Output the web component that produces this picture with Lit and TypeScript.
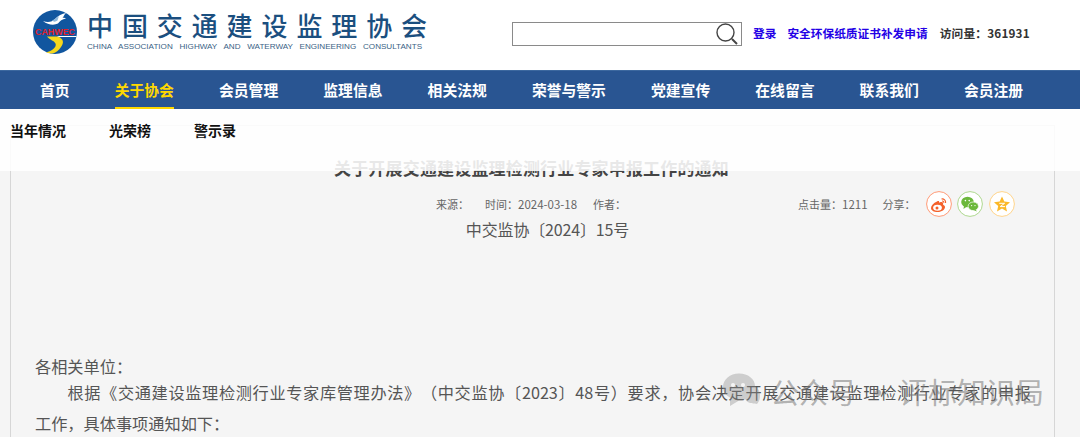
import { LitElement, html, css, svg } from "lit";
import { customElement } from "lit/decorators.js";

const NAV = ["首页", "关于协会", "会员管理", "监理信息", "相关法规", "荣誉与警示", "党建宣传", "在线留言", "联系我们", "会员注册"];

const logo = svg`<svg class="logo" viewBox="0 0 44 44" width="44" height="44">
  <circle cx="22" cy="22" r="22" fill="#11569f"/>
  <path d="M10 11 C15 13 19 12 22 9 C25 6 29 3.500 33 3 C31 5 31 6 29.500 8 C31 7.500 32 7.800 33 8.500 C29 9 27 11 25 13.500 C21 15.500 15 15 10 11Z" fill="#fff"/>
  <path d="M19 10.500 C21 10 23 8 26 6 L24.500 10.500 C22.500 12 20.500 12 19 10.500Z" fill="#8fb8dc"/>
  <path d="M14 26.500 H25 C31 29 31 33 28 37 C26 40 23 43 19 43.500 C17 43.500 15 43 13 42.500 C19 41 24 37 22.500 33.500 C21.500 31 17 30 14 26.500Z" fill="#f6d81c"/>
  <path d="M24 26 H43.500 V27 H26Z" fill="#fff"/>
  <text x="22" y="24.500" text-anchor="middle" class="logotext">CAHWEC</text>
</svg>`;

const search = svg`<svg viewBox="0 0 24 24" width="24" height="24" fill="none" stroke="#444" stroke-width="1.4">
  <circle cx="10.500" cy="10.500" r="8.500"/><path d="M17 17 L22 22" stroke-width="2"/>
</svg>`;

const weibo = svg`<svg viewBox="0 0 26 26" width="26" height="26">
  <circle cx="13" cy="13" r="12.400" fill="#fff" stroke="#ff9a76" stroke-width="1"/>
  <path d="M11 10.500 C7.500 12 5 14.500 5 17 C5 19.500 8 21 11.500 21 C16 21 19 18.500 19 16 C19 14.500 17.500 14 17 13.500 C17.500 12 17 11 15.500 11 C14.500 11 13.500 11.500 13 11.500 C13.400 10 12.500 9.800 11 10.500Z" fill="#f4622c"/>
  <ellipse cx="11.500" cy="16.800" rx="4.400" ry="3" fill="#fff"/>
  <circle cx="11" cy="17" r="1.500" fill="#f4622c"/>
  <path d="M15.500 8 C18 7.500 20 9.500 19.600 12 M16 10 C17.200 9.800 18 10.600 17.800 11.800" fill="none" stroke="#f4622c" stroke-width="1.100"/>
</svg>`;

const wechat = svg`<svg viewBox="0 0 26 26" width="26" height="26">
  <circle cx="13" cy="13" r="12.400" fill="#fff" stroke="#aed88f" stroke-width="1"/>
  <ellipse cx="10.500" cy="11" rx="6.300" ry="5.300" fill="#6cb83c"/>
  <path d="M7 14.500 L6.500 18 L10 15.500Z" fill="#6cb83c"/>
  <ellipse cx="16.300" cy="15.300" rx="5.200" ry="4.300" fill="#6cb83c" stroke="#fff" stroke-width=".7"/>
  <path d="M18.500 18.500 L20 20.500 L16.500 19Z" fill="#6cb83c"/>
  <circle cx="8.400" cy="9.600" r=".8" fill="#fff"/><circle cx="12.200" cy="9.600" r=".8" fill="#fff"/>
  <circle cx="14.600" cy="14.600" r=".65" fill="#fff"/><circle cx="18" cy="14.600" r=".65" fill="#fff"/>
</svg>`;

const qzone = svg`<svg viewBox="0 0 26 26" width="26" height="26">
  <circle cx="13" cy="13" r="12.400" fill="#fff" stroke="#ffd48a" stroke-width="1"/>
  <path d="M13 5.500 L15.300 10.600 L21 11.200 L16.800 14.900 L18 20.400 L13 17.600 L8 20.400 L9.200 14.900 L5 11.200 L10.700 10.600Z" fill="#fbb829"/>
  <path d="M10.200 12.300 H15.600 L11.200 15.600 H16" fill="none" stroke="#fff" stroke-width="1"/>
</svg>`;

const wmIcon = svg`<svg viewBox="0 0 40 36" width="40" height="36" fill="#8c8c8c" fill-opacity=".38">
  <path d="M17 .5 C8 .5 1 6.500 1 14 C1 18.500 3.500 22 8 24.500 L8 33 L17 27.500 C20 27.500 22 27 23 26 C27 32 33 30 35 31 C38 28 38 24 38 22 C38 17 34 13 33 13 C33 6 26 .5 17 .5Z"/>
  <circle cx="11" cy="12" r="2" fill="#f5f5f5" fill-opacity="1"/><circle cx="21" cy="12" r="2" fill="#f5f5f5" fill-opacity="1"/>
</svg>`;

@customElement("app-root")
export class AppRoot extends LitElement {
  static styles = css`
    :host {
      display: block;
      position: relative;
      width: 1080px;
      height: 437px;
      overflow: hidden;
      background: #f5f5f5;
      font-family: "Noto Sans CJK SC", "Liberation Sans", sans-serif;
      color: #555;
      text-spacing-trim: space-all;
    }
    .head {
      height: 70px;
      background: #fff;
      display: flex;
      align-items: flex-start;
      box-sizing: border-box;
      padding: 10px 50px 0 33px;
    }
    .logo { flex: none; }
    .logotext { font: bold 8.900px "Liberation Sans", sans-serif; fill: #e0202a; }
    .brand { margin-left: 10px; width: 350px; margin-top: -1px; }
    .cn {
      font-size: 26px;
      line-height: 31px;
      letter-spacing: 8.900px;
      color: #1b4f7f;
      font-weight: 500;
      white-space: nowrap;
    }
    .en {
      margin-top: 1px;
      font: 8.100px/12px "Liberation Sans", sans-serif;
      color: #3a5f85;
      white-space: nowrap;
      word-spacing: 4.500px;
    }
    .search {
      flex: none;
      box-sizing: border-box;
      width: 230px;
      height: 24px;
      margin: 12px 0 0 75px;
      background: #fff;
      border: 1px solid #8a8a8a;
      display: flex;
      align-items: center;
      justify-content: flex-end;
      padding-right: 2px;
    }
    .top {
      display: flex;
      margin: 13px 0 0 11px;
      font-size: 11.700px;
      line-height: 20px;
      font-weight: 700;
      white-space: nowrap;
    }
    .top a { color: #2300e6; margin-right: 11px; }
    .top span { color: #333; margin-left: 1px; letter-spacing: .2px; }
    nav {
      height: 39px;
      background: #295592;
      border-top: 1px solid #3c689f;
      box-sizing: border-box;
      display: flex;
      gap: 45.100px;
      padding-left: 40px;
    }
    nav a {
      color: #fff;
      font-size: 14.800px;
      line-height: 38px;
      font-weight: 700;
      height: 36px;
      white-space: nowrap;
    }
    nav a.on { color: #ffd800; border-bottom: 2.500px solid #ffd800; }
    .sub {
      position: absolute;
      left: 0;
      right: 0;
      top: 109px;
      height: 62px;
      background: rgba(255, 255, 255, .88);
      display: flex;
      gap: 43px;
      padding: 11px 0 0 10px;
      box-sizing: border-box;
      font-size: 14px;
      line-height: 20px;
      font-weight: 700;
      color: #111;
    }
    .card {
      margin: 16px 25px 0 10px;
      height: 340px;
      border: 1px solid #d6d6d6;
      box-sizing: border-box;
      padding: 31px 23px 0 24px;
    }
    h1 {
      margin: 0 0 0 -3px;
      font-size: 17px;
      line-height: 22px;
      font-weight: 700;
      letter-spacing: .17px;
      color: #444;
      text-align: center;
    }
    .meta {
      display: flex;
      align-items: center;
      height: 26px;
      margin-top: 12px;
      font-size: 11px;
      color: #666;
      white-space: nowrap;
    }
    .meta .l { display: flex; gap: 16px; margin-left: 401px; }
    .meta .time { display: flex; }
    .meta .digits { font-size: 11.500px; }
    .meta .r { display: flex; align-items: center; margin-left: 172px; }
    .meta .r .share { margin-left: 15px; margin-right: 10px; }
    .icons { display: flex; gap: 5.500px; }
    .icons svg { display: block; }
    .num {
      margin: 0 0 0 -3px;
      text-align: center;
      text-indent: 2em;
      font-size: 16px;
      letter-spacing: -.15px;
      line-height: 24px;
    }
    .body { margin-top: 114px; font-size: 16.200px; color: #555; }
    .body p { margin: 0; }
    .p1 { line-height: 22px; }
    .first {
      display: block;
      text-indent: 2em;
      line-height: 31px;
      text-align: justify;
      text-align-last: justify;
      text-justify: inter-character;
    }
    .next { display: block; line-height: 31px; }
    .wm {
      position: absolute;
      left: 722px;
      top: 373px;
      display: flex;
      align-items: center;
      gap: 8px;
      font-size: 29px;
      line-height: 36px;
      color: rgba(120, 120, 120, .55);
      white-space: nowrap;
      pointer-events: none;
    }
  `;

  render() {
    return html`
      <header class="head">
        ${logo}
        <div class="brand">
          <div class="cn">中国交通建设监理协会</div>
          <div class="en">CHINA ASSOCIATION HIGHWAY AND WATERWAY ENGINEERING CONSULTANTS</div>
        </div>
        <div class="search">${search}</div>
        <div class="top">
          <a>登录</a><a>安全环保纸质证书补发申请</a><span>访问量：361931</span>
        </div>
      </header>
      <nav>
        ${NAV.map((n) => html`<a class=${n === "关于协会" ? "on" : ""}>${n}</a>`)}
      </nav>
      <main class="card">
        <h1>关于开展交通建设监理检测行业专家申报工作的通知</h1>
        <div class="meta">
          <div class="l">
            <span>来源：</span>
            <span class="time"><span>时间：</span><span class="digits">2024-03-18</span></span>
            <span>作者：</span>
          </div>
          <div class="r">
            <span>点击量：<span class="digits">1211</span></span>
            <span class="share">分享：</span>
            <div class="icons">${weibo}${wechat}${qzone}</div>
          </div>
        </div>
        <p class="num">中交监协〔2024〕15号</p>
        <div class="body">
          <p class="p1">各相关单位：</p>
          <p>
            <span class="first">根据《交通建设监理检测行业专家库管理办法》（中交监协〔2023〕48号）要求，协会决定开展交通建设监理检测行业专家的申报</span>
            <span class="next">工作，具体事项通知如下：</span>
          </p>
        </div>
      </main>
      <div class="sub"><span>当年情况</span><span>光荣榜</span><span>警示录</span></div>
      <div class="wm">${wmIcon}<span>公众号 · 评标知识局</span></div>
    `;
  }
}
